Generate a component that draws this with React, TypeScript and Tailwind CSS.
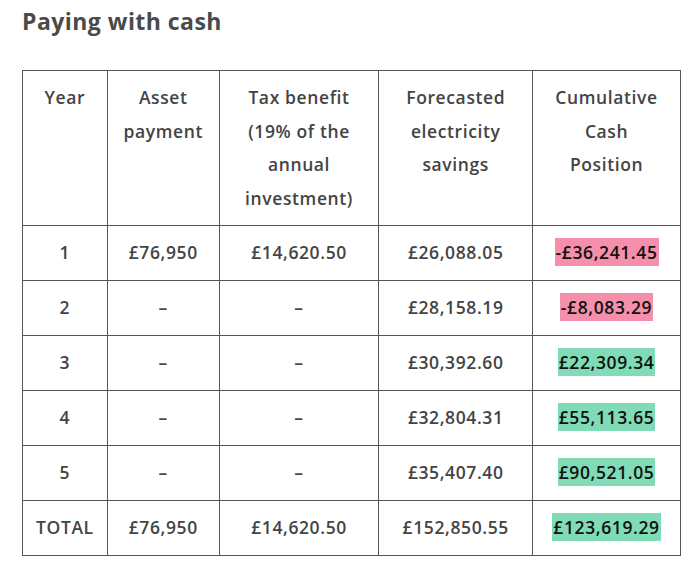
import React from "react"

type Row = {
  year: string
  asset: string
  tax: string
  savings: string
  cash: string
  tone: "neg" | "pos"
}

const rows: Row[] = [
  { year: "1", asset: "£76,950", tax: "£14,620.50", savings: "£26,088.05", cash: "-£36,241.45", tone: "neg" },
  { year: "2", asset: "–", tax: "–", savings: "£28,158.19", cash: "-£8,083.29", tone: "neg" },
  { year: "3", asset: "–", tax: "–", savings: "£30,392.60", cash: "£22,309.34", tone: "pos" },
  { year: "4", asset: "–", tax: "–", savings: "£32,804.31", cash: "£55,113.65", tone: "pos" },
  { year: "5", asset: "–", tax: "–", savings: "£35,407.40", cash: "£90,521.05", tone: "pos" },
  { year: "TOTAL", asset: "£76,950", tax: "£14,620.50", savings: "£152,850.55", cash: "£123,619.29", tone: "pos" },
]

export default function App() {
  return (
    <div className="w-[693px] h-[573px] bg-white px-[22px] pt-[6px] text-[#444]" style={{ fontFamily: '"Open Sans", sans-serif' }}>
      <h2 className="text-[23px] font-bold leading-[30px] tracking-[0.02em] text-[#4a4a4a]">Paying with cash</h2>

      <table className="mt-[34px] w-[659px] border-collapse text-center text-[17.5px] font-semibold leading-[33.5px] tracking-[0.035em]">
        <thead>
          <tr className="h-[155px] align-top">
            <th className="w-[85px] border border-[#555] px-2 pt-[10px] font-semibold">Year</th>
            <th className="w-[112px] border border-[#555] px-2 pt-[10px] font-semibold">Asset payment</th>
            <th className="w-[160px] border border-[#555] px-3 pt-[10px] font-semibold">Tax benefit (19% of the annual investment)</th>
            <th className="w-[154px] border border-[#555] px-3 pt-[10px] font-semibold">Forecasted electricity savings</th>
            <th className="w-[148px] border border-[#555] px-[15px] pt-[10px] font-semibold">Cumulative Cash Position</th>
          </tr>
        </thead>
        <tbody>
          {rows.map((r) => (
            <tr key={r.year} className="h-[55px]">
              <td className="border border-[#555] px-1">{r.year}</td>
              <td className="border border-[#555] px-1">{r.asset}</td>
              <td className="border border-[#555] px-1">{r.tax}</td>
              <td className="border border-[#555] px-1">{r.savings}</td>
              <td className="border border-[#555] px-1">
                <span
                  className={`px-[1px] py-[2px] text-[#111] ${r.tone === "neg" ? "bg-[#f68fab]" : "bg-[#7fdcb6]"}`}
                >
                  {r.cash}
                </span>
              </td>
            </tr>
          ))}
        </tbody>
      </table>
    </div>
  )
}
